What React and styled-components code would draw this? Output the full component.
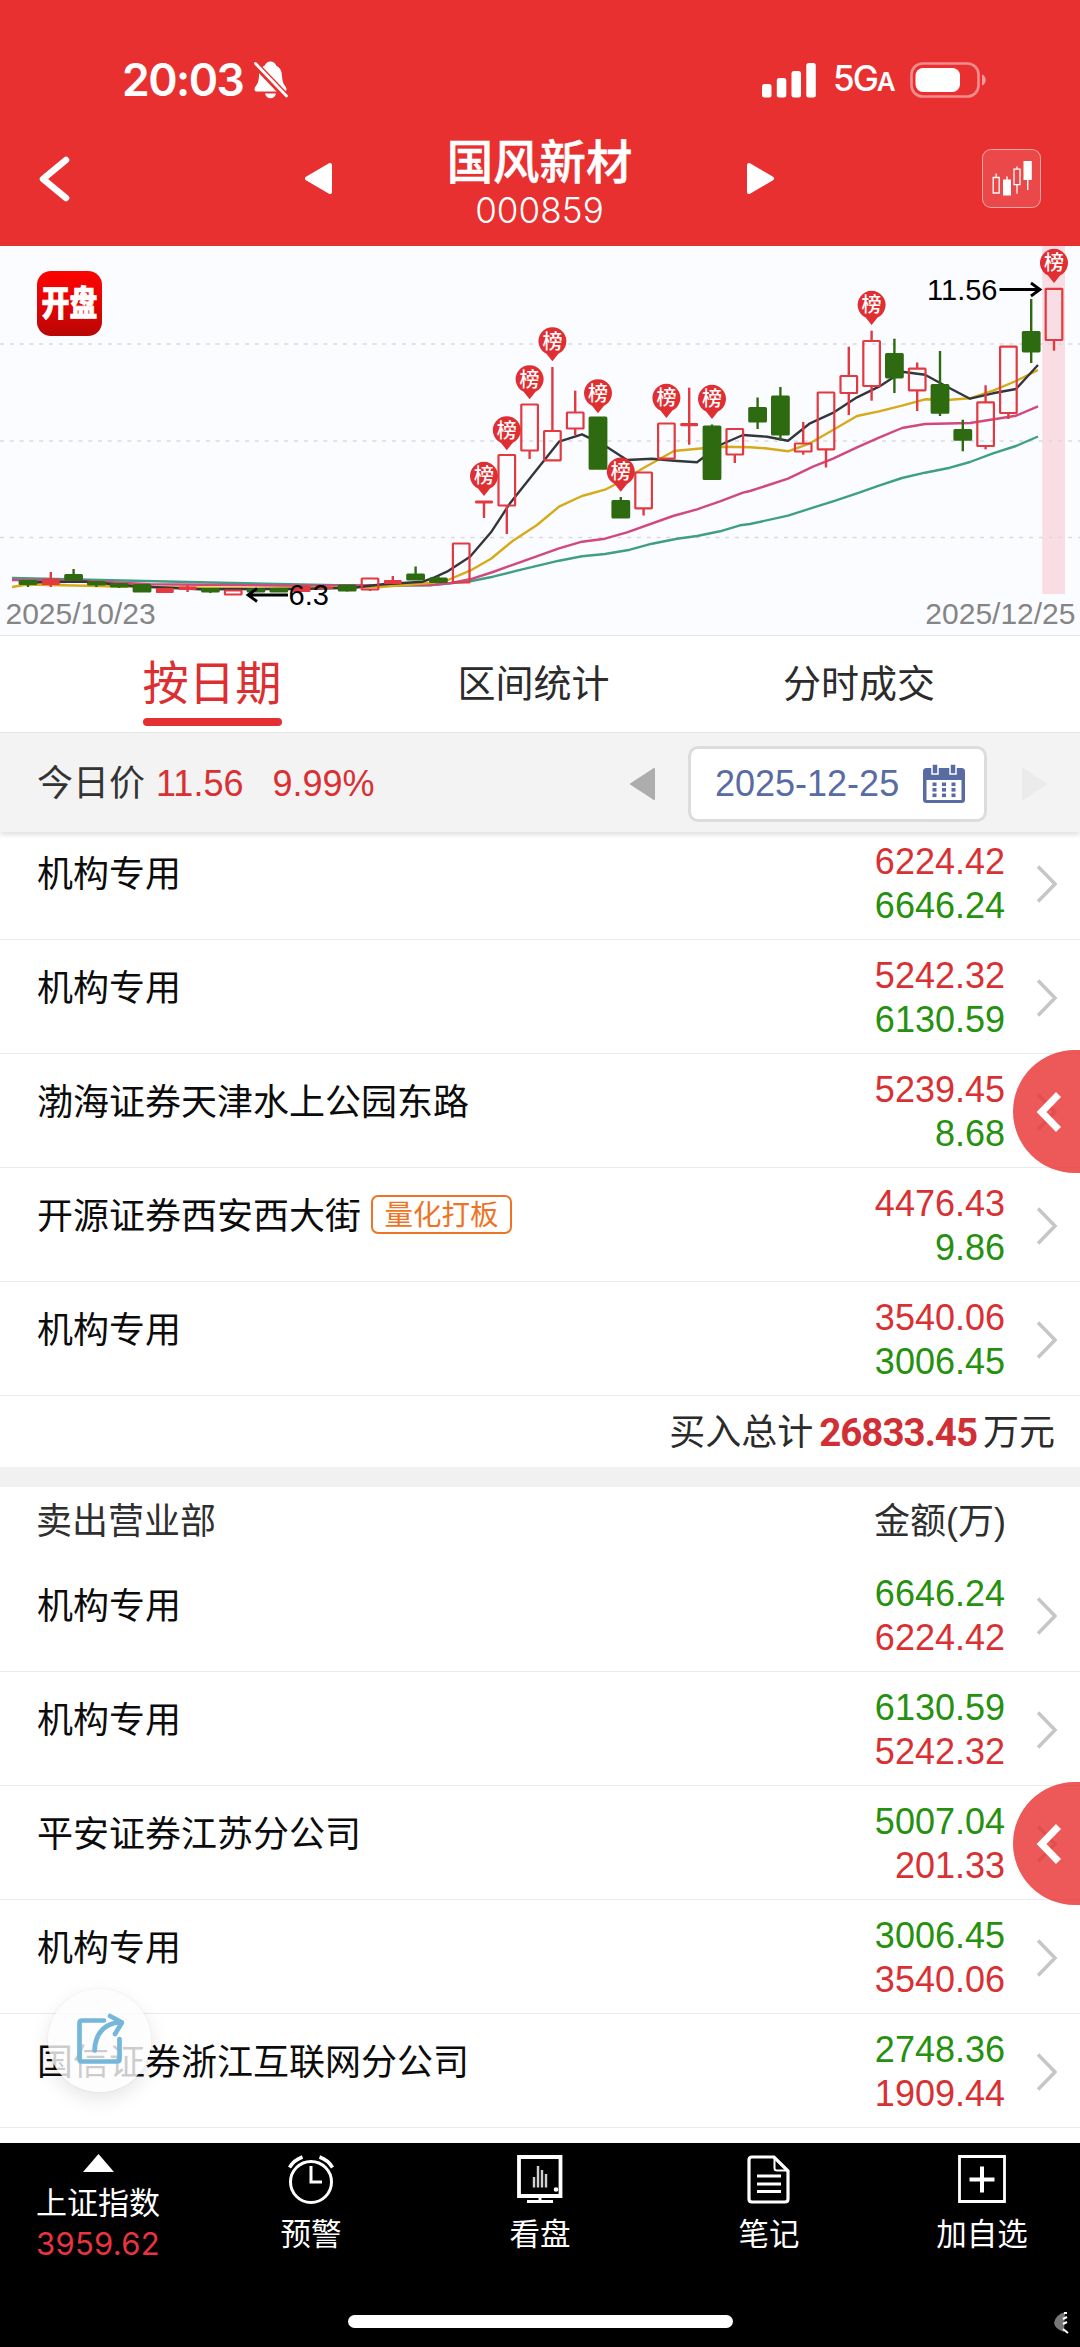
import React from "react";
import styled, { createGlobalStyle } from "styled-components";

const GlobalStyle = createGlobalStyle`
  * {
    box-sizing: border-box;
  }

  body {
    margin: 0;
    background: #fff;
    font-family: "Liberation Sans", "Noto Sans CJK SC", sans-serif;
  }

  svg {
    display: block;
    flex-shrink: 0;
  }
`;

const Page = styled.div`
  position: relative;
  display: flex;
  flex-direction: column;
  width: 1080px;
  height: 2347px;
  overflow: hidden;
  background: #fff;
`;

const Header = styled.header`
  height: 246px;
  flex-shrink: 0;
  background: #e93030;
  color: #fff;
`;

const StatusBar = styled.div`
  display: flex;
  align-items: center;
  height: 111px;
  padding: 49px 93px 0 122px;
`;

const Time = styled.span`
  font: 600 44.5px/60px Inter, sans-serif;
  letter-spacing: -1.5px;
  width: 132px;
`;

const StatusRight = styled.div`
  display: flex;
  align-items: center;
  margin-left: auto;
`;

const Network = styled.span`
  width: 76px;
  margin-right: 18px;
  padding-left: 17px;
  font: 500 35px/60px Inter, sans-serif;
  letter-spacing: -2px;
  white-space: nowrap;

  small {
    font-size: 26px;
    font-weight: 600;
  }
`;

const TitleBar = styled.div`
  display: grid;
  grid-template-columns: 305px 27px 1fr 27px 306px;
  align-items: center;
  height: 135px;
`;

const BackCell = styled.div`
  padding-left: 38px;
`;

const Title = styled.div`
  padding-top: 13px;
  text-align: center;
`;

const StockName = styled.h1`
  margin: 0;
  font-family: "Liberation Sans", "Noto Sans CJK SC", sans-serif;
  font-size: 46.4px;
  font-weight: 500;
  line-height: 50px;
  -webkit-text-stroke: 0.5px #fff;
`;

const StockCode = styled.div`
  font: 300 35px/44px Inter, sans-serif;
  letter-spacing: 0.1px;
`;

const KlineButton = styled.div`
  display: flex;
  align-items: center;
  justify-content: center;
  width: 59px;
  height: 59px;
  margin-left: auto;
  margin-right: 39px;
  border: 1.5px solid rgba(255, 255, 255, 0.5);
  border-radius: 9px;
  background: rgba(255, 255, 255, 0.12);
`;

const ChartPanel = styled.section`
  height: 390px;
  flex-shrink: 0;
  background: #fbfcff;
  border-bottom: 1px solid #e4e7ea;
`;

const Tabs = styled.nav`
  display: grid;
  grid-template-columns: 372px 271px 380px;
  height: 97px;
  flex-shrink: 0;
  padding-left: 26px;
  border-bottom: 1px solid #e6e8e8;
`;

const Tab = styled.div`
  display: flex;
  flex-direction: column;
  align-items: center;
  color: ${(props) => (props.$active ? "#dc2f31" : "#2b2b2b")};
  font-size: ${(props) => (props.$active ? "46.3px" : "38px")};
  line-height: 96px;
`;

const ActiveLabel = styled.div`
  height: 82px;
  line-height: 97px;
`;

const Underline = styled.div`
  width: 139px;
  height: 8px;
  border-radius: 4px;
  background: #e43032;
`;

const PriceBar = styled.div`
  position: relative;
  z-index: 1;
  display: flex;
  align-items: center;
  height: 99px;
  flex-shrink: 0;
  padding: 2px 32px 0 37px;
  background: #f3f3f3;
  box-shadow: 0 3px 5px rgba(0, 0, 0, 0.12);
  font-size: 36px;
  line-height: 44px;
  color: #333;
`;

const PriceText = styled.div`
  width: 592px;
  white-space: nowrap;

  em {
    font-style: normal;
    color: #d93033;
    margin-left: 11px;
  }

  em + em {
    margin-left: 29px;
  }
`;

const DateBox = styled.div`
  display: flex;
  align-items: center;
  gap: 24px;
  width: 299px;
  height: 76px;
  margin: 0 34px 0 32px;
  padding-left: 24px;
  border: 3px solid #dcdcdc;
  border-radius: 10px;
  background: #fff;
  color: #586ba3;
  white-space: nowrap;
`;

const List = styled.main`
  height: 1311px;
  flex-shrink: 0;
  overflow: hidden;

  > :first-child {
    margin-top: -5.8px;
  }
`;

const Row = styled.div`
  display: flex;
  align-items: flex-start;
  height: 113.88px;
  padding: 14px 23px 0 37px;
  border-bottom: 1.5px solid #ebebeb;
  font-size: 36px;
  line-height: 44px;
  color: #0c0c0c;

  > svg {
    margin: 25px 0 0 31px;
  }
`;

const Broker = styled.div`
  display: flex;
  align-items: center;
  flex: 1;
  padding-top: 13px;
  white-space: nowrap;
`;

const Tag = styled.span`
  width: 141px;
  height: 39px;
  margin: -4px 0 0 10px;
  border: 2.5px solid #ee7425;
  border-radius: 7px;
  font-size: 28.5px;
  line-height: 36px;
  text-align: center;
  color: #ee7425;
`;

const Amounts = styled.div`
  text-align: right;
`;

const Amount = styled.div`
  color: ${(props) => (props.$side === "buy" ? "#d93033" : "#26900f")};
`;

const Total = styled.div`
  display: flex;
  justify-content: flex-end;
  height: 71.4px;
  padding-right: 25px;
  font-size: 36px;
  line-height: 74px;
  color: #2b2b2b;

  b {
    margin: 0 6px;
    font-family: Roboto, sans-serif;
    font-size: 38.5px;
    letter-spacing: -1px;
    color: #d03035;
  }
`;

const Divider = styled.div`
  height: 20px;
  background: #f1f1f1;
`;

const SectionHead = styled.div`
  display: flex;
  justify-content: space-between;
  height: 71.4px;
  padding: 13px 74px 0 36px;
  font-size: 36px;
  line-height: 44px;
  color: #2f2f2f;
`;

const SideHandle = styled.div`
  position: absolute;
  right: 0;
  top: ${(props) => props.$top}px;
  display: flex;
  align-items: center;
  width: 67px;
  height: 123px;
  padding-left: 21px;
  border-radius: 62px 0 0 62px;
  background: rgba(233, 48, 48, 0.8);
`;

const ShareButton = styled.div`
  position: absolute;
  left: 48px;
  top: 1989px;
  display: flex;
  align-items: center;
  justify-content: center;
  width: 103px;
  height: 103px;
  padding: 0 1px 4px 0;
  border-radius: 50%;
  background: rgba(252, 252, 252, 0.8);
  box-shadow: 0 7px 20px rgba(0, 0, 0, 0.1), 0 0 3px rgba(0, 0, 0, 0.06);
`;

const BottomBar = styled.footer`
  position: relative;
  flex: 1;
  display: grid;
  grid-template-columns: 196px 230px 228px 230px 196px;
  align-items: start;
  background: #000;
  color: #fff;
`;

const IndexItem = styled.div`
  display: flex;
  flex-direction: column;
  align-items: center;
  padding-top: 11px;
  font-size: 31px;
  line-height: 40px;

  strong {
    font: 400 31px/40px Inter, sans-serif;
    letter-spacing: 0.3px;
    color: #e63541;
  }

  svg {
    margin-bottom: 12px;
  }
`;

const NavItem = styled.div`
  display: flex;
  flex-direction: column;
  align-items: center;
  padding-top: 11px;
  font-size: 30.5px;
  line-height: 40px;

  svg {
    margin-bottom: 10px;
  }
`;

const HomeIndicator = styled.div`
  position: absolute;
  left: 348px;
  bottom: 19px;
  width: 385px;
  height: 13px;
  border-radius: 7px;
  background: #fff;
`;

const CornerMark = styled.div`
  position: absolute;
  right: 11px;
  bottom: 12px;
`;

// [body top, body bottom, wick top, wick bottom, kind]
// r = hollow red, f = flat red, g = green
const candles = [
  [581, 584, 581, 587, "g"],
  [579, 584.5, 572, 587, "f"],
  [575, 579.5, 569, 579, "g"],
  [582, 584.5, 581, 587, "g"],
  [584, 586.5, 583, 588, "g"],
  [585, 591.5, 585, 591, "g"],
  [588.5, 592.5, 588, 592, "f"],
  [587, 589.5, 585, 592, "f"],
  [589, 591.5, 588, 593, "g"],
  [590.5, 594.5, 590, 594, "r"],
  [589.5, 591.5, 589, 591, "g"],
  [589, 591.5, 589, 591, "g"],
  [586, 591.5, 585, 592, "f"],
  [587, 588.5, 587, 588, "f"],
  [585.5, 590.5, 585, 591.5, "g"],
  [578.5, 589.5, 578, 591, "r"],
  [580.7, 583.5, 576, 583, "f"],
  [574.5, 579.5, 566.5, 579, "g"],
  [578.5, 582, 576, 582, "g"],
  [543.5, 582.5, 543, 583, "r"],
  [501, 503, 501, 518, "f"],
  [455, 505.5, 455, 534, "r"],
  [404.5, 450.5, 404, 459, "r"],
  [431, 460.3, 367, 460, "r"],
  [412.5, 428.5, 390.7, 435, "r"],
  [417.7, 468.7, 418, 468, "g"],
  [501, 517.5, 497, 517, "g"],
  [472.5, 508.3, 472, 515.5, "r"],
  [423.5, 458.7, 423, 459, "r"],
  [423.7, 425.7, 387.7, 444.7, "f"],
  [426.5, 479, 424.5, 479, "g"],
  [429, 454.5, 429, 463, "r"],
  [408, 421.5, 397.5, 429, "g"],
  [396.5, 434.5, 387, 440.7, "g"],
  [443.5, 451.5, 422, 454.7, "r"],
  [392.5, 449.3, 392, 467.5, "r"],
  [376, 393, 346.7, 415, "r"],
  [341, 386, 330.7, 400.7, "r"],
  [354, 377.3, 338.7, 393, "g"],
  [368.7, 390.3, 362.5, 411, "r"],
  [385, 412.7, 351, 416, "g"],
  [430, 439.7, 419.7, 451.3, "g"],
  [402.3, 446, 385.3, 449.3, "r"],
  [346.7, 413, 346, 419, "r"],
  [332, 351.3, 299, 363, "g"],
  [288.8, 340, 288, 350.7, "r"],
];

// candle index -> top of the pin
const pins = [
  [20, 462],
  [21, 416.3],
  [22, 365.3],
  [23, 327.3],
  [25, 379.3],
  [26, 457.7],
  [28, 384],
  [30, 385],
  [37, 291],
  [45, 249],
];

const averages = [
  {
    color: "#3f9f83",
    points:
      "12,578 100,580 200,582.3 360,585.7 430,585.3 470,581.3 493,576.7 517,570.7 559,560.7 582,556.3 605,554 630,549.7 652,543.7 677,538.7 697,536 720,531.3 740,525.3 750,524 788,515.7 813,507.7 833,501.3 857,493.3 879,485.7 902,478 925,472.7 950,467.7 970,462 993,453.3 1016,446 1038,436.5",
  },
  {
    color: "#d1487f",
    points:
      "12,580 83,580.7 150,584.3 300,585.7 430,585 450,583.3 470,579.3 493,572 517,563.3 559,548.3 582,541.7 605,538.7 627,532.3 673,516 697,509.3 720,501.3 743,492.7 750,491 788,478.7 813,466.7 833,458.7 857,447.3 879,437.7 902,428 925,424 970,423 1016,415.7 1038,406.3",
  },
  {
    color: "#d6ab17",
    points:
      "12,587 27,584.5 133,586.7 260,588.5 380,587 430,583 448,580 470,570.7 491,558.7 513,540.7 537,525 559,506.7 582,496 605,489.7 627,478.3 643,468.3 674,451 703,448.3 723,446.7 750,447.3 765,448.3 788,451.3 810,443.3 833,430 857,416 879,411.3 902,405.7 925,399.3 950,399.7 970,398.3 993,390.7 1016,381 1038,370",
  },
  {
    color: "#33373c",
    points:
      "27,582.5 83,581.5 140,586.5 200,589.3 300,589 353,587.7 383,584.3 423,581.7 433,578 447,571.7 470,556.7 491,532.3 510,503.3 559,441.7 582,434.3 605,445.7 627,460 652,458.7 674,460.7 697,462.3 720,445 743,435 767,436.7 788,440.7 810,423.3 834,412.3 857,397.3 879,386.7 902,371.7 925,374.7 947,386.7 970,398.7 993,393.3 1016,389 1038,365",
  },
];

const candleX = (i) => 28 + i * 22.8;

const buyers = [
  { name: "机构专用", first: "6224.42", second: "6646.24" },
  { name: "机构专用", first: "5242.32", second: "6130.59" },
  { name: "渤海证券天津水上公园东路", first: "5239.45", second: "8.68" },
  {
    name: "开源证券西安西大街",
    tag: "量化打板",
    first: "4476.43",
    second: "9.86",
  },
  { name: "机构专用", first: "3540.06", second: "3006.45" },
];

const sellers = [
  { name: "机构专用", first: "6646.24", second: "6224.42" },
  { name: "机构专用", first: "6130.59", second: "5242.32" },
  { name: "平安证券江苏分公司", first: "5007.04", second: "201.33" },
  { name: "机构专用", first: "3006.45", second: "3540.06" },
  { name: "国信证券浙江互联网分公司", first: "2748.36", second: "1909.44" },
];

function BellOff() {
  return (
    <svg width="34" height="38" viewBox="0 0 34 38">
      <path
        d="M16.5 0.5c-3 0-5 1.8-5.6 4C6.800 6.500 5.200 10 5 14.500c-.2 6-1.200 8-3.500 11C-.3 28 .5 30.500 3 30.500h27c2.500 0 3.300-2.500 1.600-4.800-2.200-3-3.400-5.200-3.600-11.200-.2-4.500-2-8-5.900-10-.6-2.200-2.600-4-5.600-4Z"
        fill="#fff"
      />
      <path d="M11 32.500h11c-.7 3-2.700 4.800-5.500 4.800s-4.800-1.800-5.500-4.800Z" fill="#fff" />
      <path d="M-1 1 34 37.500" stroke="#e93030" strokeWidth="7" />
      <path d="M1.500 2.500 32.500 35" stroke="#fff" strokeWidth="2.800" strokeLinecap="round" />
    </svg>
  );
}

function Signal() {
  return (
    <svg width="54" height="35" viewBox="0 0 54 35" fill="#fff">
      <rect x="0" y="21" width="9.500" height="13.500" rx="2.500" />
      <rect x="14.800" y="15" width="9.500" height="19.500" rx="2.500" />
      <rect x="29.500" y="8" width="9.500" height="26.500" rx="2.500" />
      <rect x="44.300" y="0" width="9.500" height="34.500" rx="2.500" />
    </svg>
  );
}

function Battery() {
  return (
    <svg width="77" height="36" viewBox="0 0 77 36">
      <rect
        x="1.500"
        y="1.500"
        width="67"
        height="33"
        rx="11"
        fill="none"
        stroke="#fff"
        strokeOpacity="0.45"
        strokeWidth="2.600"
      />
      <rect x="5.500" y="6" width="44.500" height="24" rx="7.500" fill="#fff" />
      <path d="M72 12.500c5 1.500 5 9.500 0 11Z" fill="#fff" fillOpacity="0.5" />
    </svg>
  );
}

function Triangle({ flip, color, size = 31, round = 4 }) {
  return (
    <svg width="27" height={size} viewBox={`0 0 27 ${size}`}>
      <path
        d={
          flip
            ? `M2 2 25 ${size / 2} 2 ${size - 2}Z`
            : `M25 2 2 ${size / 2} 25 ${size - 2}Z`
        }
        fill={color}
        stroke={color}
        strokeWidth={round}
        strokeLinejoin="round"
      />
    </svg>
  );
}

function KlineIcon() {
  return (
    <svg width="40" height="36" viewBox="0 0 40 36" fill="#fff">
      <path
        d="M1.200 16.500h6v15.500h-6zM4.200 12.500v4M22 8.200h6v15.500h-6zM25 5.500v2.700M25 23.700v9"
        fill="none"
        stroke="#fff"
        strokeWidth="1.300"
      />
      <path d="M11 18.500h8v16h-8zM14.300 15.500h1.400v3h-1.400zM31.500 0h8.300v19h-8.300zM35 19h1.400v10h-1.400z" />
    </svg>
  );
}

function Calendar() {
  return (
    <svg width="42" height="39" viewBox="0 0 42 39">
      <rect x="0" y="4" width="42" height="35" rx="3.500" fill="#586ba3" />
      <rect x="3.500" y="16" width="35" height="20" fill="#fff" />
      <path
        d="M9 0h6v10H9zM27 0h6v10h-6z"
        fill="#586ba3"
        stroke="#fff"
        strokeWidth="1.500"
      />
      {[18.5, 24, 29.5].map((y) =>
        [9.5, 19, 28.5].map((x) => (
          <rect key={`${x}-${y}`} x={x} y={y} width="4" height="3.600" fill="#586ba3" />
        ))
      )}
    </svg>
  );
}

function RowArrow() {
  return (
    <svg width="21" height="38" viewBox="0 0 21 38">
      <path
        d="M2 1.500 19 19 2 36.500"
        fill="none"
        stroke="#c6c6c6"
        strokeWidth="3.400"
      />
    </svg>
  );
}

function Kline() {
  return (
    <svg width="1080" height="389" viewBox="0 246 1080 389">
      <defs>
        <linearGradient id="logo" x1="0" y1="0" x2="0" y2="1">
          <stop offset="0" stopColor="#fb0400" />
          <stop offset="0.45" stopColor="#e80404" />
          <stop offset="1" stopColor="#b80606" />
        </linearGradient>
      </defs>

      <rect x="1042.300" y="246" width="22.700" height="348" fill="#f8dde4" />
      {[344, 441, 537.5].map((y) => (
        <path
          key={y}
          d={`M0 ${y}H1080`}
          stroke="#d9dade"
          strokeWidth="1.500"
          strokeDasharray="4 5.800"
        />
      ))}

      <rect x="37" y="271" width="65" height="65" rx="14" fill="url(#logo)" />
      <text
        transform="translate(69.500 316) scale(1 1.240)"
        textAnchor="middle"
        fill="#fff"
        stroke="#fff"
        strokeWidth="0.600"
        fontFamily="Noto Sans CJK SC"
        fontWeight="900"
        fontSize="28"
      >
        开盘
      </text>

      {averages.map((line) => (
        <polyline
          key={line.color}
          points={line.points}
          fill="none"
          stroke={line.color}
          strokeWidth="2.400"
          strokeLinejoin="round"
        />
      ))}

      {candles.map(([top, bottom, high, low, kind], i) => {
        const x = candleX(i);
        const color = kind === "g" ? "#2d6a10" : "#e23a40";
        return (
          <g key={i} stroke={color} strokeWidth="2.400">
            {high < top && <path d={`M${x} ${high}V${top}`} />}
            {low > bottom && <path d={`M${x} ${bottom}V${low}`} />}
            <rect
              x={x - 8.3}
              y={top}
              width="16.600"
              height={bottom - top}
              rx="0.500"
              fill={kind === "r" ? "none" : color}
              strokeWidth={kind === "f" ? 1.2 : 2.2}
            />
          </g>
        );
      })}

      {pins.map(([i, top]) => {
        const x = candleX(i);
        return (
          <g key={i}>
            <path
              d={`M${x} ${top + 34}L${x - 6} ${top + 26.5}A14 14 0 1 1 ${x + 6} ${top + 26.5}Z`}
              fill="#e02f33"
            />
            <text
              x={x}
              y={top + 21.3}
              textAnchor="middle"
              fill="#fff"
              fontFamily="Noto Sans CJK SC"
              fontWeight="500"
              fontSize="20"
            >
              榜
            </text>
          </g>
        );
      })}

      <g fill="none" stroke="#000" strokeWidth="2.800">
        <path d="M248 595H288M257 588.500 248 595 257 601.500" />
        <path d="M999.500 289.500H1040M1031 283 1040 289.500 1031 296" />
      </g>
      <g fontFamily="Liberation Sans" fontSize="29" fill="#000">
        <text x="288.500" y="605">
          6.3
        </text>
        <text x="997.500" y="300" textAnchor="end">
          11.56
        </text>
      </g>
      <g fontFamily="Liberation Sans" fontSize="30" fill="#858585">
        <text x="5.500" y="624">
          2025/10/23
        </text>
        <text x="1075.500" y="624" textAnchor="end">
          2025/12/25
        </text>
      </g>
    </svg>
  );
}

function Handle({ top }) {
  return (
    <SideHandle $top={top}>
      <svg width="28" height="40" viewBox="0 0 28 40">
        <path
          d="M24.500 2.500 7.500 20 24.500 37.500"
          fill="none"
          stroke="#fff"
          strokeWidth="7"
        />
      </svg>
    </SideHandle>
  );
}

function BrokerRow({ item, side }) {
  const other = side === "buy" ? "sell" : "buy";
  return (
    <Row>
      <Broker>
        {item.name}
        {item.tag && <Tag>{item.tag}</Tag>}
      </Broker>
      <Amounts>
        <Amount $side={side}>{item.first}</Amount>
        <Amount $side={other}>{item.second}</Amount>
      </Amounts>
      <RowArrow />
    </Row>
  );
}

const iconProps = {
  width: 50,
  height: 50,
  viewBox: "0 0 50 50",
  fill: "none",
  stroke: "#fff",
};

export default function App() {
  return (
    <>
      <GlobalStyle />
      <Page>
        <Header>
          <StatusBar>
            <Time>20:03</Time>
            <BellOff />
            <StatusRight>
              <Signal />
              <Network>
                5G<small>A</small>
              </Network>
              <Battery />
            </StatusRight>
          </StatusBar>
          <TitleBar>
            <BackCell>
              <svg width="32" height="46" viewBox="0 0 32 46">
                <path
                  d="M28 4 5 23 28 42"
                  fill="none"
                  stroke="#fff"
                  strokeWidth="6.500"
                  strokeLinecap="round"
                  strokeLinejoin="round"
                />
              </svg>
            </BackCell>
            <Triangle color="#fff" />
            <Title>
              <StockName>国风新材</StockName>
              <StockCode>000859</StockCode>
            </Title>
            <Triangle flip color="#fff" />
            <KlineButton>
              <KlineIcon />
            </KlineButton>
          </TitleBar>
        </Header>

        <ChartPanel>
          <Kline />
        </ChartPanel>

        <Tabs>
          <Tab $active>
            <ActiveLabel>按日期</ActiveLabel>
            <Underline />
          </Tab>
          <Tab>区间统计</Tab>
          <Tab>分时成交</Tab>
        </Tabs>

        <PriceBar>
          <PriceText>
            今日价<em>11.56</em>
            <em>9.99%</em>
          </PriceText>
          <Triangle color="#adadad" size={34} round={2} />
          <DateBox>
            2025-12-25
            <Calendar />
          </DateBox>
          <Triangle flip color="#ebebeb" size={34} round={2} />
        </PriceBar>

        <List>
          {buyers.map((item, i) => (
            <BrokerRow key={i} item={item} side="buy" />
          ))}
          <Total>
            买入总计<b>26833.45</b>万元
          </Total>
          <Divider />
          <SectionHead>
            <span>卖出营业部</span>
            <span>金额(万)</span>
          </SectionHead>
          {sellers.map((item, i) => (
            <BrokerRow key={i} item={item} side="sell" />
          ))}
        </List>

        <BottomBar>
          <IndexItem>
            <svg width="31" height="18" viewBox="0 0 31 18">
              <path d="M15.500 0 31 18H0Z" fill="#fff" />
            </svg>
            上证指数
            <strong>3959.62</strong>
          </IndexItem>
          <NavItem>
            <svg {...iconProps} strokeWidth="3">
              <circle cx="25" cy="28" r="20.500" />
              <path d="M25 12v16h11" />
              <path d="M3.500 13.500Q8 6 16.500 3M46.500 13.500Q42 6 33.500 3" strokeWidth="3.500" />
            </svg>
            预警
          </NavItem>
          <NavItem>
            <svg {...iconProps} strokeWidth="3.800">
              <path d="M4 3h41.500v39h-41.500z" />
              <path d="M12 47.500h26M25 43v4" strokeWidth="3" />
              <path d="M19 23v10.500M23 12v21.500M27 16v17.500M31 20v13.500" strokeWidth="2.400" stroke="#d0d0d0" />
              <circle cx="41" cy="35.500" r="1.200" strokeWidth="2.200" />
            </svg>
            看盘
          </NavItem>
          <NavItem>
            <svg {...iconProps} strokeWidth="3.200">
              <path d="M8 3h22l14 14v28q0 3-3 3H8q-3 0-3-3V6q0-3 3-3Z" />
              <path d="M30.500 4v10q0 2.500 2.500 2.500h11" strokeWidth="2" />
              <path d="M13 22h24M13 30h24M13 37.500h24" strokeWidth="2.800" />
            </svg>
            笔记
          </NavItem>
          <NavItem>
            <svg {...iconProps} strokeWidth="2.800">
              <path d="M2.500 2.500h45v45h-45z" />
              <path d="M25 12.500v26M12.500 25.500h25" strokeWidth="4" />
            </svg>
            加自选
          </NavItem>
          <HomeIndicator />
          <CornerMark>
            <svg width="16" height="24" viewBox="0 0 16 24">
              <path d="M12 1Q2 4 1 12q1 6 10 9Z" fill="#777" />
              <path
                d="M11 2h3M10 8l4-2M10 13l4-2M10 18l5 4"
                stroke="#fff"
                strokeWidth="2"
              />
            </svg>
          </CornerMark>
        </BottomBar>

        <Handle top={1050} />
        <Handle top={1782} />

        <ShareButton>
          <svg width="50" height="54" viewBox="0 0 50 54" fill="none">
            <path
              d="M30 8.500H8q-2.500 0-2.500 2.500v36q0 2.500 2.500 2.500h35q2.500 0 2.500-2.500V27"
              stroke="#74b7da"
              strokeWidth="4.700"
              strokeLinecap="round"
            />
            <path
              d="M20.500 38.500Q22 12 47 10M36 4l12 6.500-7 11.500"
              stroke="#74b7da"
              strokeWidth="4.700"
              strokeLinecap="round"
              strokeLinejoin="round"
            />
          </svg>
        </ShareButton>
      </Page>
    </>
  );
}
